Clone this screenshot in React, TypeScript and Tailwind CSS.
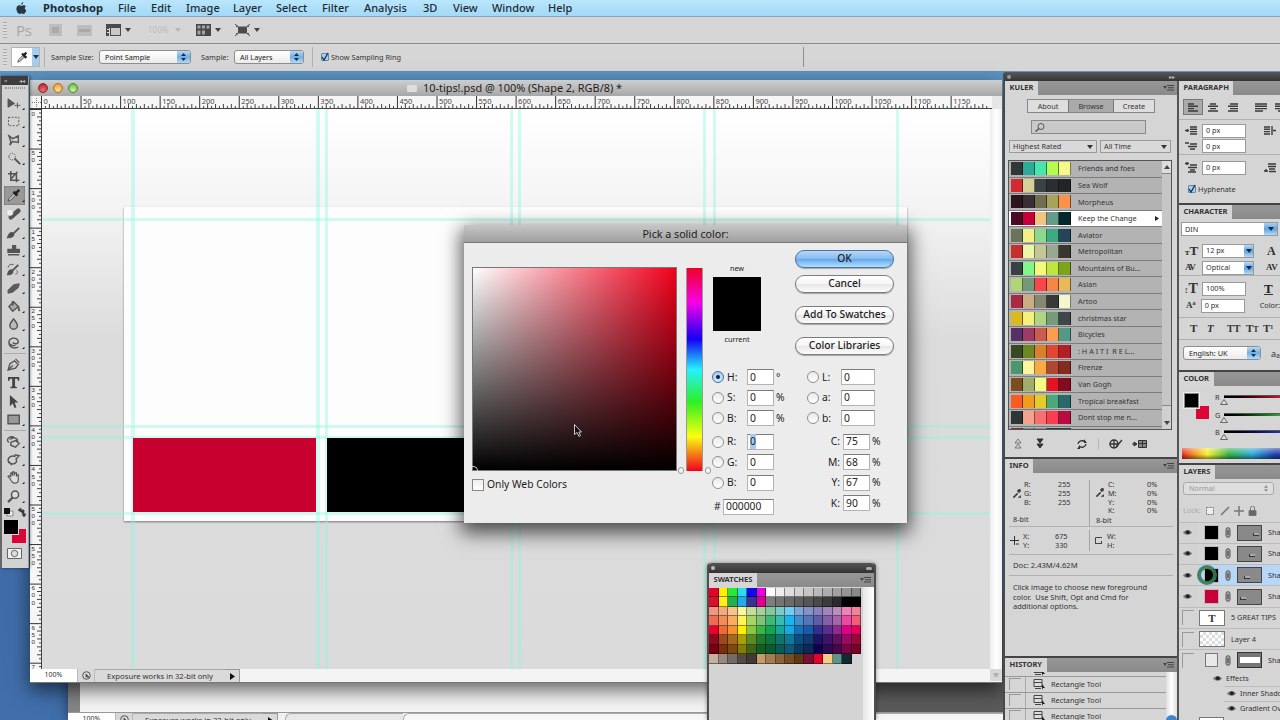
import type { ReactNode } from 'react';

const MENU: [string, string][] = [
  ['File', 'w-[33px]'],
  ['Edit', 'w-[35px]'],
  ['Image', 'w-[47px]'],
  ['Layer', 'w-[43px]'],
  ['Select', 'w-[46px]'],
  ['Filter', 'w-[42px]'],
  ['Analysis', 'w-[59px]'],
  ['3D', 'w-[30px]'],
  ['View', 'w-[39px]'],
  ['Window', 'w-[56px]'],
  ['Help', 'w-[40px]'],
];

const THEMES: { name: string; colors: string[] }[] = [
  { name: 'Friends and foes', colors: ['#333638', '#2cab96', '#45e8ac', '#b4fa50', '#f6fa86'] },
  { name: 'Sea Wolf', colors: ['#d12a30', '#d5cf98', '#3c4143', '#2a2e30', '#222526'] },
  { name: 'Morpheus', colors: ['#2a1520', '#382e33', '#6f6f50', '#a9a25a', '#fa934a'] },
  { name: 'Keep the Change', colors: ['#4d0a25', '#c60038', '#f0c483', '#669a8a', '#05292a'] },
  { name: 'Aviator', colors: ['#6c735c', '#f4f088', '#8bd98c', '#3ba983', '#234459'] },
  { name: 'Metropolitan', colors: ['#c5302a', '#edf5a6', '#c4c694', '#98a991', '#37372f'] },
  { name: 'Mountains of Bu...', colors: ['#3a4143', '#82f58b', '#f5fa7d', '#bde73f', '#7ba31c'] },
  { name: 'Asian', colors: ['#aed678', '#74997a', '#f8464b', '#f58546', '#e8b95b'] },
  { name: 'Artoo', colors: ['#a82a43', '#c9ad85', '#838773', '#383a36', '#f4f7ce'] },
  { name: 'christmas star', colors: ['#d9bb1d', '#f5f27c', '#b1d683', '#759b7b', '#40464a'] },
  { name: 'Bicycles', colors: ['#563067', '#9d3b63', '#c95b4f', '#fb9c51', '#519a87'] },
  { name: ': H A I T I  R E L...', colors: ['#374822', '#6e8722', '#d8802a', '#e14631', '#b21f27'] },
  { name: 'Firenze', colors: ['#4b966b', '#fbf69e', '#fba940', '#ae4835', '#852a20'] },
  { name: 'Van Gogh', colors: ['#7e4d1d', '#9fad6d', '#f4fa83', '#e41322', '#840c21'] },
  { name: 'Tropical breakfast', colors: ['#fa5b21', '#f09d1d', '#e3ce27', '#4ba979', '#2b686d'] },
  { name: 'Dont stop me n...', colors: ['#2e3536', '#f5a28c', '#fa6e6f', '#fa3d50', '#ba0b42'] },
  { name: '', colors: ['#753530', '#7a8c83', '#8c8c8c', '#20403d', '#33403b'] },
];

const SWATCHES: string[][] = [
  ['#e4002b', '#fff200', '#2be838', '#2bdcf0', '#1408e8', '#e800e0', '#ffffff', '#ededed', '#dedede', '#d2d2d2', '#c6c6c6', '#bababa', '#adadad', '#a1a1a1', '#959595', '#898989'],
  ['#d8102c', '#fff21a', '#20b050', '#25a9e8', '#3b3193', '#e00090', '#7d7d7d', '#747474', '#6a6a6a', '#5f5f5f', '#555555', '#494949', '#3b3b3b', '#2a2a2a', '#000000', '#000000'],
  ['#f29680', '#f4ab80', '#f8c48a', '#fbf79d', '#c5df9b', '#a3d39c', '#82ca9c', '#7accc8', '#6dcff6', '#7da7d9', '#8393ca', '#8781bd', '#a186be', '#bd8cbf', '#f080b5', '#f0829a'],
  ['#f06a55', '#f28c58', '#f8ad60', '#fff55a', '#a5d563', '#7cc576', '#3cb878', '#38bcb0', '#18b6f0', '#448ccb', '#5674b9', '#605ca8', '#8560a8', '#a864a8', '#ec4aa0', '#f05f7a'],
  ['#e80030', '#ee6a30', '#f39430', '#fff000', '#8cc63e', '#39b54a', '#14a550', '#16a89d', '#19a8e0', '#1670b9', '#1a5aa8', '#312f90', '#5c2d91', '#8f2890', '#e00088', '#e40058'],
  ['#8c0a1a', '#9a4a1c', '#a56820', '#aba000', '#5a8a28', '#1f7a30', '#0d7540', '#0e746c', '#10769a', '#0a4e80', '#123a70', '#1b1464', '#3c1468', '#620f62', '#9b0a60', '#98083c'],
  ['#790010', '#7a2e0c', '#7c4a10', '#857e05', '#406518', '#105e20', '#0a5a30', '#0a5a54', '#0c5a78', '#083a62', '#0c2854', '#0d004c', '#2e0850', '#4b0649', '#7b0446', '#7a0226'],
];

const SWATCHES_LAST = ['#c3b2a0', '#988b7e', '#736a63', '#534a45', '#403936', '#c69c6d', '#a67c52', '#8c6239', '#754c24', '#603813', '#7a1030', '#e0052e', '#f3cd85', '#5f9488', '#12292d'];

const H_LABELS = Array.from({ length: 24 }, (_, i) => i * 50);
const V_LABELS = Array.from({ length: 15 }, (_, i) => i * 50);
const V_GUIDES = ['left-[89px] w-1', 'left-[274px] w-1', 'left-[283px] w-[3px]', 'left-[468px] w-[3px]', 'left-[476px] w-[3px]', 'left-[661px] w-[3px]', 'left-[671px] w-[3px]', 'left-[854px] w-[3px]'];
const H_GUIDES = ['top-[109px]', 'top-[316px]', 'top-[327px]', 'top-[403px]'];

function Grip({ className = '' }: { className?: string }) {
  return <div className={`bg-[repeating-linear-gradient(180deg,#aaa_0_1px,#ddd_1px_3px)] ${className}`} />;
}

function Caret({ className = '' }: { className?: string }) {
  return (
    <svg className={`h-[4px] w-[6px] ${className}`} viewBox="0 0 6 4">
      <path d="M0 0h6L3 4z" fill="currentColor" />
    </svg>
  );
}

function MenuBar() {
  return (
    <div className="flex h-[17px] shrink-0 items-center border-b border-[#8aa5b5] bg-gradient-to-b from-[#b9e6fb] to-[#a4d8f6] text-[11px] font-medium text-[#1c2b33]">
      <svg className="ml-[15px] mr-[15px] h-[13px] w-[13px]" viewBox="0 0 13 13" fill="#2a3740">
        <path d="M8.2 0C8.3 1.400 7.400 2.600 6.200 2.700 6.100 1.500 7 .3 8.200 0zM10.800 4.300C9.400 5.200 9.500 7.500 11.300 8.300 10.900 9.700 9.900 11.900 8.700 11.900 8 11.900 7.500 11.500 6.600 11.500 5.700 11.500 5.200 11.900 4.500 11.900 3 11.900 1.400 9 1.400 6.800 1.400 4.500 2.800 3.300 4.300 3.300 5.200 3.300 6 3.900 6.500 3.900 7.100 3.900 7.900 3.200 9 3.300 9.700 3.300 10.400 3.700 10.800 4.300z" />
      </svg>
      <span className="w-[75px] text-[11.200px] font-bold">Photoshop</span>
      {MENU.map(([label, width]) => (
        <span key={label} className={width}>{label}</span>
      ))}
    </div>
  );
}

function AppBar() {
  return (
    <div className="flex h-[27px] shrink-0 items-center border-b border-[#8c8c8c] bg-[#d6d6d6] text-[#444]">
      <Grip className="ml-[3px] h-[16px] w-[4px]" />
      <span className="ml-[9px] w-[33px] text-[15px] tracking-tight text-[#a9a9a9]">Ps</span>
      <div className="flex h-[12px] w-[13px] items-center justify-center bg-[#bdbdbd]">
        <div className="h-[6px] w-[7px] bg-[#a9a9a9]" />
      </div>
      <div className="ml-[15px] flex h-[11px] w-[15px] items-center justify-center bg-[#bdbdbd]">
        <div className="h-[3px] w-[11px] bg-[#a9a9a9]" />
      </div>
      <svg className="ml-[14px] h-[12px] w-[15px]" viewBox="0 0 15 12">
        <path d="M0 0h15v12H4V4H3v8H0z" fill="#4a4a4a" />
        <path d="M5 4h9v7H5z" fill="#c9c9c9" />
        <path d="M1 5h2v1H1zM1 8h2v1H1z" fill="#ddd" />
      </svg>
      <Caret className="ml-[4px]" />
      <span className="ml-[17px] w-[27px] text-[8px] text-[#bcbcbc]">100%</span>
      <Caret className="text-[#b5b5b5]" />
      <svg className="ml-[15px] h-[12px] w-[15px]" viewBox="0 0 15 12">
        <path d="M0 0h15v12H0z" fill="#474747" />
        <path d="M1.500 1.500h3v3h-3zM6 1.500h3v3H6zM10.500 1.500h3v3h-3zM1.500 6.500h3v4h-3zM6 6.500h3v4H6z" fill="#a5a5a5" />
      </svg>
      <Caret className="ml-[4px]" />
      <svg className="ml-[14px] h-[12px] w-[15px]" viewBox="0 0 15 12">
        <path d="M3 2.500h9v7H3z" fill="#4c4c4c" />
        <path d="M0 0l3 2.500M15 0l-3 2.500M0 12l3-2.500M15 12l-3-2.500M1 2.500h2M12 2.500h2M1 9.500h2M12 9.500h2" stroke="#4c4c4c" fill="none" />
      </svg>
      <Caret className="ml-[4px]" />
    </div>
  );
}

function AquaSelect({ label, className }: { label: string; className: string }) {
  return (
    <div className={`flex items-center overflow-hidden rounded-[3px] border border-[#8e8e8e] bg-gradient-to-b from-white to-[#ececec] pl-[5px] text-[#222] ${className}`}>
      <span className="flex-1 whitespace-nowrap">{label}</span>
      <span className="flex h-full w-[13px] items-center justify-center bg-gradient-to-b from-[#b9d8f3] via-[#72afe4] to-[#b2dcf7]">
        <svg className="h-[8px] w-[5px]" viewBox="0 0 5 8">
          <path d="M0 3l2.500-3L5 3zM0 5l2.500 3L5 5z" fill="#16304f" />
        </svg>
      </span>
    </div>
  );
}

function CheckBox() {
  return (
    <span className="flex h-[8px] w-[8px] items-center justify-center rounded-[1px] border border-[#6787a6] bg-[#a7cdf0]">
      <svg className="h-[8px] w-[8px] overflow-visible" viewBox="0 0 8 8">
        <path d="M1 4l2 3 4-7" stroke="#14304d" strokeWidth="1.300" fill="none" />
      </svg>
    </span>
  );
}

function OptionsBar() {
  return (
    <div className="flex h-[27px] shrink-0 items-center bg-[#d6d6d6] pb-px text-[7.300px] text-[#333]">
      <Grip className="ml-[3px] h-[17px] w-[4px]" />
      <div className="ml-[4px] flex h-[20px] w-[29px] border border-[#b5b5b5] bg-white">
        <svg className="m-[2px] h-[14px] w-[16px]" viewBox="0 0 16 16">
          <path d="M3 14l1-3 5-5 2 2-5 5z" fill="#b5b5b5" stroke="#555" strokeWidth=".8" />
          <path d="M8 4l5 5M10 6l3-3" stroke="#222" strokeWidth="2.600" />
        </svg>
        <div className="flex h-full flex-1 items-center justify-center bg-[#a5cdf0]">
          <Caret className="text-[#1a3550]" />
        </div>
      </div>
      <div className="ml-[4px] h-[20px] w-px bg-[#b0b0b0]" />
      <span className="ml-[6px] w-[48px] whitespace-nowrap">Sample Size:</span>
      <AquaSelect label="Point Sample" className="h-[14px] w-[92px]" />
      <span className="ml-[10px] w-[33px]">Sample:</span>
      <AquaSelect label="All Layers" className="h-[14px] w-[70px]" />
      <div className="ml-[8px] mr-[8px] h-[20px] w-px bg-[#b0b0b0]" />
      <CheckBox />
      <span className="ml-[2px] whitespace-nowrap">Show Sampling Ring</span>
      <div className="ml-[402px] h-[20px] w-px bg-[#909090]" />
    </div>
  );
}

function Light({ className }: { className: string }) {
  return <div className={`h-[10px] w-[10px] rounded-full border ${className}`} />;
}

function HRuler() {
  return (
    <svg className="h-[13px] w-full shrink-0 bg-[#f6f6f6]" viewBox="0 0 972 13" preserveAspectRatio="none">
      <path d="M0 12.500h972" stroke="#444" />
      <path d="M11.500 0v13" stroke="#444" />
      <path d="M2 6.500h9M6.500 2v10" stroke="#777" strokeDasharray="1 1" />
      {H_LABELS.map((n, i) => (
        <g key={n}>
          <path d={`M${11.500 + i * 39.550} 0v13`} stroke="#333" />
          {Array.from({ length: 9 }, (_, k) => (
            <path key={k} d={`M${11.500 + i * 39.550 + (k + 1) * 3.955} ${k % 2 ? 8 : 10}v5`} stroke="#444" />
          ))}
          <text x={13.500 + i * 39.550} y="8" fontSize="7.500" fill="#444">{n}</text>
        </g>
      ))}
      <path d="M962 0h10v13h-10z" fill="#e6e6e6" />
    </svg>
  );
}

function VRuler() {
  return (
    <svg className="h-[560px] w-[12px] shrink-0 bg-[#f6f6f6]" viewBox="0 0 12 560">
      <path d="M11.500 0v560" stroke="#444" />
      {V_LABELS.map((n, i) => (
        <g key={n}>
          <path d={`M0 ${i * 39.550 + 0.500}h12`} stroke="#333" />
          {Array.from({ length: 9 }, (_, k) => (
            <path key={k} d={`M${k % 2 ? 7 : 9} ${i * 39.550 + (k + 1) * 3.955}h5`} stroke="#444" />
          ))}
          {String(n).split('').map((d, k) => (
            <text key={k} x="1.500" y={i * 39.550 + 6.500 + k * 7.200} fontSize="6.200" fill="#333" className="font-['Liberation_Sans']">{d}</text>
          ))}
        </g>
      ))}
    </svg>
  );
}

function StatusBar({ className = '' }: { className?: string }) {
  return (
    <div className={`flex h-[13px] shrink-0 items-stretch bg-[#f4f4f4] text-[7.700px] leading-[12px] text-[#333] ${className}`}>
      <span className="w-[47px] bg-white text-center text-[7px]">100%</span>
      <span className="flex w-[18px] items-center justify-center border-x border-[#b9b9b9] bg-[#d9d9d9]">
        <svg className="h-[9px] w-[9px]" viewBox="0 0 9 9" fill="none" stroke="#555">
          <circle cx="4.500" cy="4.500" r="3.800" />
          <path d="M4 3v3h3z" fill="#666" />
        </svg>
      </span>
      <span className="w-[130px] border-t border-[#aaa] bg-[#dadada] text-center">Exposure works in 32-bit only</span>
      <span className="flex w-[15px] items-center justify-center border-r border-t border-[#999] bg-[#dadada]">
        <svg className="h-[7px] w-[5px]" viewBox="0 0 5 7"><path d="M0 0l5 3.500L0 7z" fill="#111" /></svg>
      </span>
    </div>
  );
}

function DocumentWindow() {
  return (
    <div className="absolute left-[30px] top-[80px] flex h-[603px] w-[972px] flex-col border-b border-[#777] bg-[#f4f4f4] shadow-[0_7px_18px_rgba(0,0,0,0.6)]">
      <div className="flex h-[16px] shrink-0 items-center bg-gradient-to-b from-[#cfcfcf] to-[#a7a7a7] pl-[8px]">
        <Light className="border-[#8d2731] bg-[radial-gradient(circle_at_50%_80%,#ef6f70,#b01a2b)]" />
        <Light className="ml-[5px] border-[#a9702a] bg-[radial-gradient(circle_at_50%_80%,#ffe293,#ea8e2e)]" />
        <Light className="ml-[5px] border-[#4b8a35] bg-[radial-gradient(circle_at_50%_80%,#c8f59b,#56b83c)]" />
        <div className="ml-[329px] h-[7px] w-[10px] rounded-[1px] bg-[#dedede]" />
        <span className="ml-[6px] mt-px whitespace-nowrap text-[10.900px] leading-none text-[#222]">10-tips!.psd @ 100% (Shape 2, RGB/8) *</span>
      </div>
      <HRuler />
      <div className="flex h-[560px] shrink-0">
        <VRuler />
        {/* Canvas: guides and shapes sit at their document positions */}
        <div className="relative w-[948px] overflow-hidden bg-[linear-gradient(180deg,#fff_0px,#f5f5f5_90px,#dcdcdc_230px,#dbdbdb_560px)]">
          <div className="absolute left-[82px] top-[98px] h-[314px] w-[783px] bg-[#fdfdfd] shadow-[0_1px_2px_rgba(0,0,0,0.45)]" />
          {V_GUIDES.map((g) => (
            <div key={g} className={`absolute inset-y-0 bg-[#8cf7e0]/40 ${g}`} />
          ))}
          {H_GUIDES.map((g) => (
            <div key={g} className={`absolute inset-x-0 h-[3px] bg-[#8cf7e0]/40 ${g}`} />
          ))}
          <div className="absolute left-[91px] top-[329px] h-[74px] w-[183px] bg-[#c8002f]" />
          <div className="absolute left-[285px] top-[329px] h-[74px] w-[183px] bg-black" />
        </div>
        <div className="w-[12px] bg-gradient-to-r from-[#ededed] via-white to-[#f0f0f0]" />
      </div>
      <div className="flex h-[13px] shrink-0">
        <StatusBar className="flex-1" />
        <svg className="h-[12px] w-[12px] bg-[#d8d8d8]" viewBox="0 0 12 12">
          <path d="M3.500 5h5M4.500 7h3" stroke="#888" />
        </svg>
      </div>
    </div>
  );
}

function BackWindow() {
  return (
    <div className="absolute left-[68px] top-[600px] flex h-[120px] w-[936px] flex-col bg-[#8b8b8b] shadow-[0_0_12px_rgba(0,0,0,0.5)]">
      <div className="flex h-[112px]">
        <div className="w-[12px] bg-[#858585]" />
        <div className="w-[796px] bg-[#f4f4f4]" />
        <div className="flex-1 bg-[#5a5a5a]" />
      </div>
      <div className="flex h-[8px] overflow-hidden border-t border-[#999] bg-[#f1f1f1]">
        <StatusBar />
        <div className="ml-[7px] h-[10px] w-[118px] rounded-tl-md border-l border-t border-[#aaa] bg-[#e8e8e8]" />
        <div className="h-[10px] flex-1 rounded-tl-md border-l border-t border-[#aaa] bg-[#f6f6f6]" />
      </div>
    </div>
  );
}

const TOOLS_A: ReactNode[] = [
  <path d="M2 3l7 5-7 4zM12 7v6M9 10h6" fill="#555" />,
  <path d="M2.500 3.500h11v9h-11z" fill="none" strokeDasharray="2 1.500" />,
  <path d="M3 3l4 3 6-3v7l-6-1-3 4 1-4z" fill="none" strokeWidth="1.500" />,
  <g><path d="M3 6a3.500 3.500 0 0 1 7 0 3.500 3.500 0 0 1-7 0" fill="none" strokeDasharray="1.500 1" /><path d="M9 8l6 6" strokeWidth="2" /></g>,
  <path d="M5 2v10h9M2 5h9v9M5 11l7-8" fill="none" strokeWidth="1.600" />,
  <g><path d="M2 14l1-3 5-5 2 2-5 5z" fill="#bbb" /><path d="M8 4l4 4M10 6l4-4" strokeWidth="2.800" stroke="#222" /></g>,
  <g><path d="M5 12l8-7" strokeWidth="5" strokeLinecap="round" /><circle cx="4" cy="7" r="3.500" fill="#eee" stroke="#aaa" strokeDasharray="1 1" /></g>,
  <path d="M2 13c2-5 4-5 6-4 0 3-3 4-6 4zM8 9l6-6" fill="#444" strokeWidth="2" />,
  <path d="M7 3h3v4h4v3H2V7h5zM2 12.500h12" fill="#555" strokeWidth="1.500" />,
  <g><path d="M2 13c1-4 3-5 5-4 0 3-2 4-5 4zM7 9l6-6" fill="#444" strokeWidth="2" /><path d="M2 6a4 4 0 0 1 6-3M11 9c2 1 1 4-1 4" fill="none" /></g>,
  <path d="M2 11l6-6 6-1-1 4-6 5-5 1z" fill="#5b5b5b" />,
  <g><path d="M3 8l5-5 5 5-6 5z" fill="#aaa" strokeWidth="1.500" /><path d="M7 7V2M13 8l1 5" strokeWidth="2" /></g>,
  <path d="M8 2c3 4 4 5 4 7a4 4 0 0 1-8 0c0-2 1-3 4-7z" fill="#bbb" strokeWidth="1.500" />,
  <path d="M10 11a5 4 0 1 1 3-4c0 3-4 3-6 1M3 8c0 5 5 7 10 5" fill="none" strokeWidth="1.500" />,
];

const TOOLS_B: ReactNode[] = [
  <path d="M2 14l2-7 5-3 4 4-3 4zM2 14l5-5M10 2l4 4" fill="#ccc" strokeWidth="1.400" />,
  <path d="M2 2h12v4h-1.500L12 4H9.500v8l2 1v1h-7v-1l2-1V4H4l-.5 2H2z" fill="#444" stroke="none" />,
  <path d="M4 1l9 8H9l2 5-2 1-2-5-3 3z" fill="#444" stroke="none" />,
  <path d="M2 3.500h12v9H2z" fill="#999" strokeWidth="1.500" />,
];

const TOOLS_C: ReactNode[] = [
  <path d="M3 9a4 3 0 1 1 6-5M4 6c4-4 9-1 8 2M5 9l5-2 4 3-4 4-5-2z" fill="none" strokeWidth="1.500" />,
  <path d="M3 12c-3-6 3-9 7-7M4 12c5 2 8-1 7-4M9 3l5 1-4 4M3 10l3 4" fill="none" strokeWidth="1.500" />,
  <path d="M4 9L2 7l1-1 2 1V3l1.500 0V6L7 2h1.500v4l1-3H11l0 4 1-2 1 0v5c0 3-2 4-4 4s-3-1-5-5z" fill="#ddd" strokeWidth="1.200" />,
  <g><circle cx="9.500" cy="6" r="3.800" fill="#ddd" strokeWidth="1.600" /><path d="M7 9l-5 5" strokeWidth="2.300" /></g>,
];

function Tool({ children, active = false }: { children: ReactNode; active?: boolean }) {
  return (
    <div className={`flex h-[18.450px] w-[21px] items-center justify-center ${active ? 'bg-[#999] shadow-[inset_0_0_2px_#555]' : ''}`}>
      <svg className="ml-[2px] h-[15px] w-[19px]" viewBox="0 0 20 16" stroke="#555">
        {children}
        <path d="M17 15h2.500v-2.500z" fill="#222" stroke="none" />
      </svg>
    </div>
  );
}

function Toolbox() {
  return (
    <div className="absolute left-0 top-[76px] flex h-[492px] w-[29px] flex-col items-center border-l-2 border-r border-l-[#686868] border-r-[#999] bg-[#d2d2d2] pr-px shadow-[1px_0_3px_rgba(0,0,0,0.5)]">
      <div className="flex h-[9px] w-[27px] shrink-0 items-center justify-between bg-[#3d3d3d] px-[3px] text-[6px] leading-none text-[#bbb]">
        <span>×</span>
        <span>◂◂</span>
      </div>
      <div className="mb-[5px] mt-[2px] h-[2px] w-[20px] shrink-0 border-y border-dotted border-[#999]" />
      {TOOLS_A.map((icon, i) => (
        <Tool key={i} active={i === 5}>{icon}</Tool>
      ))}
      <div className="my-px h-px w-[22px] shrink-0 bg-[#aaa]" />
      {TOOLS_B.map((icon, i) => (
        <Tool key={i}>{icon}</Tool>
      ))}
      <div className="my-px h-px w-[22px] shrink-0 bg-[#aaa]" />
      {TOOLS_C.map((icon, i) => (
        <Tool key={i}>{icon}</Tool>
      ))}
      <svg className="mt-[1px] h-[10px] w-[24px] shrink-0" viewBox="0 0 24 10">
        <path d="M4 4h6v5H4z" fill="#eee" stroke="#888" />
        <path d="M1 1h6v6H1z" fill="#111" />
        <path d="M16 3h5v5M15 3l3-2v4zM19 7h4l-2 3z" fill="#333" stroke="#444" strokeWidth=".8" />
      </svg>
      <div className="relative mt-[3px] h-[24px] w-[22px] shrink-0">
        <div className="absolute bottom-[1px] right-0 h-[14px] w-[14px] bg-[#dd0535]" />
        <div className="absolute left-0 top-0 h-[15px] w-[15px] border-b border-r border-[#ddd] bg-black" />
      </div>
      <svg className="mt-[4px] h-[11px] w-[15px] shrink-0" viewBox="0 0 15 11" stroke="#666">
        <path d="M.5 .5h14v10H.5z" fill="#eee" />
        <circle cx="7.500" cy="5.500" r="3.200" fill="#ddd" />
      </svg>
    </div>
  );
}

function DialogButton({ label, primary = false, className = '' }: { label: string; primary?: boolean; className?: string }) {
  return (
    <button
      type="button"
      className={`flex h-[18px] w-[99px] items-center justify-center rounded-full border text-[10.300px] font-medium text-[#1d1d1d] shadow-[0_1px_1px_rgba(0,0,0,0.3)] ${
        primary
          ? 'border-[#4a75a8] bg-[linear-gradient(180deg,#b9d7f5_0%,#86bbf0_48%,#62a9ee_52%,#b2e0fd_100%)]'
          : 'border-[#7d7d7d] bg-[linear-gradient(180deg,#fff_0%,#f6f6f6_48%,#e8e8e8_52%,#fbfbfb_100%)]'
      } ${className}`}
    >
      {label}
    </button>
  );
}

function Radio({ on = false }: { on?: boolean }) {
  return (
    <span className={`flex h-[12px] w-[12px] shrink-0 items-center justify-center rounded-full border ${on ? 'border-[#436d9a] bg-gradient-to-b from-[#a8cbec] to-[#cfeaff]' : 'border-[#8f8f8f] bg-gradient-to-b from-[#e9e9e9] to-white'}`}>
      {on && <span className="h-[4px] w-[4px] rounded-full bg-[#10233a]" />}
    </span>
  );
}

function Field({ value, className, selected = false }: { value: string; className: string; selected?: boolean }) {
  return (
    <span className={`flex h-[16px] shrink-0 items-center border border-[#b3b3b3] border-t-[#7c7c7c] bg-white pl-[2px] ${className}`}>
      <span className={selected ? 'bg-[#a5cbf3]' : ''}>{value}</span>
    </span>
  );
}

function RadioRow({ label, unit = '', on, selected, wide }: { label: string; unit?: string; on?: boolean; selected?: boolean; wide?: boolean }) {
  return (
    <div className="flex h-[20.500px] items-center">
      <Radio on={on} />
      <span className={wide ? 'w-[22px] pl-[3px]' : 'w-[23px] pl-[3px]'}>{label}</span>
      <Field value="0" className={wide ? 'w-[34px]' : 'w-[27px]'} selected={selected} />
      <span className="pl-[2px]">{unit}</span>
    </div>
  );
}

function CmykRow({ label, value }: { label: string; value: string }) {
  return (
    <div className="flex h-[20.500px] items-center">
      <span className="w-[36px] pr-[3px] text-right">{label}</span>
      <Field value={value} className="w-[27px]" />
      <span className="pl-[2px]">%</span>
    </div>
  );
}

function ColorPicker() {
  return (
    <div className="absolute left-[464px] top-[225px] flex h-[298px] w-[443px] flex-col bg-[#ececec] text-[10.300px] text-[#222] shadow-[0_7px_18px_3px_rgba(0,0,0,0.65)]">
      <div className="flex h-[18px] shrink-0 items-center justify-center border-b border-[#777] bg-gradient-to-b from-[#c6c6c6] to-[#a0a0a0] pt-[2px] text-[10.700px]">
        Pick a solid color:
      </div>
      <div className="flex flex-1 pl-[8px]">
        <div className="w-[205px] pt-[24px]">
          <div className="relative h-[204px] border border-[#777] bg-[linear-gradient(0deg,#000,transparent),linear-gradient(90deg,#fff,#f2001c)]">
            <svg className="absolute left-[101px] top-[156px] h-[13px] w-[8px]" viewBox="0 0 8 13">
              <path d="M.5 .5v10L3 8.500 5 12.500l1.500-1L4.800 8h2.700z" fill="#111" stroke="#ddd" strokeWidth=".9" />
            </svg>
            <div className="absolute -left-px bottom-[-1px] h-[5px] w-[6px] rounded-tr-full border-r border-t border-[#ccc]" />
          </div>
          <div className="mt-[6px] flex items-center">
            <span className="h-[12px] w-[12px] border border-[#888] bg-gradient-to-b from-[#eee] to-white" />
            <span className="ml-[3px]">Only Web Colors</span>
          </div>
        </div>
        <div className="relative ml-[9px] mt-[25px] h-[203px] w-[17px] border-x border-[#999] bg-[linear-gradient(180deg,#f00025_0%,#f700e8_17%,#1500f2_35%,#25f2ff_50%,#2cf022_66%,#fbff10_83%,#f0001e_100%)]">
          <div className="absolute -left-[9px] bottom-[-3px] h-[7px] w-[6px] rounded-full border border-[#999] bg-[#f4f4f4]" />
          <div className="absolute -right-[9px] bottom-[-3px] h-[7px] w-[6px] rounded-full border border-[#999] bg-[#f4f4f4]" />
        </div>
        <div className="ml-[9px] flex-1">
          <div className="flex h-[124px]">
            <div className="flex w-[50px] flex-col items-center pt-[20px] text-[7.300px] leading-[11px]">
              <span>new</span>
              <div className="my-[3px] h-[54px] w-[48px] bg-black" />
              <span>current</span>
            </div>
            <div className="ml-[33px] pt-[7px]">
              <DialogButton label="OK" primary />
              <DialogButton label="Cancel" className="mt-[7px]" />
              <DialogButton label="Add To Swatches" className="mt-[13px]" />
              <DialogButton label="Color Libraries" className="mt-[13px]" />
            </div>
          </div>
          <div className="flex">
            <div className="w-[95px]">
              <RadioRow label="H:" unit="°" on />
              <RadioRow label="S:" unit="%" />
              <RadioRow label="B:" unit="%" />
              <div className="h-[3px]" />
              <RadioRow label="R:" selected />
              <RadioRow label="G:" />
              <RadioRow label="B:" />
              <div className="mt-[4px] flex h-[19px] items-center">
                <span className="w-[11px] pl-[2px]">#</span>
                <Field value="000000" className="w-[51px]" />
              </div>
            </div>
            <div>
              <RadioRow label="L:" wide />
              <RadioRow label="a:" wide />
              <RadioRow label="b:" wide />
              <div className="h-[3px]" />
              <CmykRow label="C:" value="75" />
              <CmykRow label="M:" value="68" />
              <CmykRow label="Y:" value="67" />
              <CmykRow label="K:" value="90" />
            </div>
          </div>
        </div>
      </div>
    </div>
  );
}

function TabRow({ title, menu = false }: { title: string; menu?: boolean }) {
  return (
    <div className="flex h-[14px] shrink-0 items-stretch bg-gradient-to-b from-[#979797] to-[#8a8a8a]">
      <span className="flex items-center bg-[#d6d6d6] px-[4.500px] text-[7.500px] font-bold text-[#333]">{title}</span>
      {menu && (
        <svg className="ml-auto mr-[3px] mt-[3px] h-[7px] w-[11px]" viewBox="0 0 11 7">
          <path d="M0 2h4L2 5zM4 1h7v1H4zM5 3.200h6v1H5zM4 5.500h7v1H4z" fill="#444" />
        </svg>
      )}
    </div>
  );
}

function SwatchesPanel() {
  return (
    <div className="absolute left-[707px] top-[563px] flex h-[157px] w-[169px] flex-col rounded-t-[4px] border-x-2 border-[#4e4e4e] bg-[#d4d4d4] shadow-[0_0_4px_rgba(0,0,0,0.4)]">
      <div className="flex h-[10px] shrink-0 items-center justify-between rounded-t-[3px] bg-gradient-to-b from-[#555] to-[#333] px-[2px]">
        <span className="h-[4px] w-[4px] rounded-full bg-[#bbb]" />
        <span className="h-[3px] w-[6px] rounded-full bg-[#aaa]" />
      </div>
      <TabRow title="SWATCHES" menu />
      <div className="flex flex-1">
        <div className="w-[154px] pt-px">
          {SWATCHES.map((row, i) => (
            <div key={i} className="flex h-[9.450px]">
              {row.map((c, k) => (
                <span key={k} className="h-full w-[9.500px] border-b border-r border-black/45" style={{ backgroundColor: c }} />
              ))}
            </div>
          ))}
          <div className="flex h-[9.450px]">
            {SWATCHES_LAST.map((c, k) => (
              <span key={k} className="h-full w-[9.500px] border-b border-r border-black/45" style={{ backgroundColor: c }} />
            ))}
          </div>
        </div>
        <div className="ml-auto w-[11px] bg-gradient-to-r from-[#e6e6e6] to-white" />
      </div>
    </div>
  );
}

function FlatSelect({ label, className }: { label: string; className: string }) {
  return (
    <div className={`flex h-[13px] items-center justify-between border border-[#999] bg-[#d9d9d9] px-[3px] ${className}`}>
      <span className="whitespace-nowrap">{label}</span>
      <Caret className="w-[5px]" />
    </div>
  );
}

function KulerPanel() {
  return (
    <div className="flex h-[376px] shrink-0 flex-col">
      <TabRow title="KULER" menu />
      <div className="mx-auto mt-[4px] flex h-[14px] w-[128px] shrink-0 border border-[#888] bg-[#dedede] text-center leading-[12px]">
        <span className="w-[40px]">About</span>
        <span className="w-[46px] border-x border-[#777] bg-[#aaa]">Browse</span>
        <span className="flex-1">Create</span>
      </div>
      <div className="ml-[26px] mt-[7px] flex h-[14px] w-[115px] shrink-0 items-center border border-[#8a8a8a] bg-[#c9c9c9] pl-[3px]">
        <svg className="h-[9px] w-[10px]" viewBox="0 0 10 9" fill="none" stroke="#555">
          <circle cx="6" cy="3.500" r="3" />
          <path d="M4 5.500L.5 8.500" strokeWidth="1.500" />
        </svg>
      </div>
      <div className="ml-[4px] mt-[6px] flex shrink-0 gap-[3px]">
        <FlatSelect label="Highest Rated" className="w-[88px]" />
        <FlatSelect label="All Time" className="w-[71px]" />
      </div>
      <div className="ml-[3px] mt-[7px] flex h-[270px] w-[164px] shrink-0 border border-[#555] bg-[#8d8d8d]">
        <div className="w-[153px] overflow-hidden">
          {THEMES.map((theme, i) => (
            <div key={i} className={`flex h-[16.600px] items-center border-b border-[#7c7c7c] pl-[2px] ${i === 3 ? 'bg-white' : 'bg-[#b3b3b3]'}`}>
              <div className="flex h-[13px] w-[60px] shrink-0 bg-[#333]">
                {theme.colors.map((c, k) => (
                  <span key={k} className="flex-1 border-r border-black/50" style={{ backgroundColor: c }} />
                ))}
              </div>
              <span className="ml-[7px] flex-1 whitespace-pre">{theme.name}</span>
              {i === 3 && <svg className="mr-[3px] h-[5px] w-[4px]" viewBox="0 0 4 5"><path d="M0 0l4 2.500L0 5z" fill="#222" /></svg>}
            </div>
          ))}
        </div>
        <div className="flex flex-1 flex-col items-center justify-between bg-[#c6c6c6] text-[#444]">
          <span className="flex h-[13px] w-full items-center justify-center border-b border-[#888] bg-[#ddd]"><Caret className="w-[5px] rotate-180" /></span>
          <span className="flex h-[24px] w-full items-end justify-center border-t border-[#888] bg-[#d0d0d0] pb-[4px]"><Caret className="w-[5px]" /></span>
        </div>
      </div>
      <div className="flex flex-1 items-center pl-[8px]">
        <svg className="h-[12px] w-[160px]" viewBox="0 0 160 12" stroke="#333" fill="#333">
          <path d="M2 5l3-4 3 4zM2 10l3-4 3 4z" fill="none" stroke="#777" />
          <path d="M24 1h6l-3 4zM24 6h6l-3 4z" />
          <path d="M65 6a4 3.500 0 0 1 7-2M73 6a4 3.500 0 0 1-7 2" fill="none" strokeWidth="1.300" />
          <path d="M71 1v4h3zM67 7v4h-3z" stroke="none" />
          <path d="M85.500 0v12" stroke="#b5b5b5" />
          <circle cx="101" cy="6" r="4" fill="none" strokeWidth="1.500" />
          <path d="M97 6h8M101 2v8M103 9l6-7" strokeWidth="1.300" />
          <path d="M119 6h4M121 4l3 2-3 2z" />
          <path d="M125.500 2.500h8v7h-8zM125 5.500h9M129.500 2v8" fill="#888" />
        </svg>
      </div>
    </div>
  );
}

function InfoPanel() {
  return (
    <div className="flex h-[199px] shrink-0 flex-col border-t-2 border-[#444]">
      <TabRow title="INFO" menu />
      <div className="mx-[4px] flex h-[54px] shrink-0 border-b border-[#b0b0b0] pt-[7px] leading-[8.800px]">
        <div className="flex w-[81px] flex-col justify-between border-r border-[#a5a5a5] pb-[2px] pl-[4px]">
          <div className="flex items-center">
            <Dropper />
            <div className="ml-[3px] w-[34px]">R:<br />G:<br />B:</div>
            <div>255<br />255<br />255</div>
          </div>
          <span>8-bit</span>
        </div>
        <div className="flex flex-1 flex-col pl-[6px]">
          <div className="flex items-start">
            <Dropper className="mt-[8px]" />
            <div className="ml-[4px] w-[39px]">C:<br />M:<br />Y:<br />K:</div>
            <div>0%<br />0%<br />0%<br />0%</div>
          </div>
          <span className="mt-[1px]">8-bit</span>
        </div>
      </div>
      <div className="mx-[4px] flex h-[28px] shrink-0 border-b border-[#b0b0b0] py-[3px] leading-[9px]">
        <div className="flex w-[81px] items-center border-r border-[#a5a5a5] pl-[1px]">
          <svg className="h-[9px] w-[9px]" viewBox="0 0 9 9" stroke="#333"><path d="M4.500 0v9M0 4.500h9M6 8h3" /></svg>
          <div className="ml-[4px] w-[32px]">X:<br />Y:</div>
          <div>675<br />330</div>
        </div>
        <div className="flex items-center pl-[4px]">
          <svg className="h-[9px] w-[9px]" viewBox="0 0 9 9" fill="none" stroke="#444"><path d="M1.500 8V1.500H8M2 7.500h5M7.500 5v3" /></svg>
          <div className="ml-[4px]">W:<br />H:</div>
        </div>
      </div>
      <div className="mx-[4px] flex h-[21px] shrink-0 items-center border-b border-[#b0b0b0] pl-[4px] pt-px text-[7.600px]">Doc: 2.43M/4.62M</div>
      <p className="ml-[8px] mt-[7px] whitespace-nowrap text-[7.450px] leading-[9.700px]">
        Click image to choose new foreground<br />color.&nbsp; Use Shift, Opt and Cmd for<br />additional options.
      </p>
    </div>
  );
}

function Dropper({ className = '' }: { className?: string }) {
  return (
    <svg className={`h-[9px] w-[8px] ${className}`} viewBox="0 0 8 9">
      <path d="M0 8l4-4 1 1-4 4zM4 2l2-2 1 0 1 2-2 2zM5 8.500h3v-2z" fill="#444" stroke="#444" strokeWidth=".5" />
    </svg>
  );
}

function HistoryIcon() {
  return (
    <svg className="ml-[7px] h-[11px] w-[12px]" viewBox="0 0 12 11">
      <path d="M1 .5h8v7H1zM1 3.500h8M2 9.500h6" fill="#ddd" stroke="#444" />
      <path d="M9 5l3 4-2 0-1 2z" fill="#222" />
    </svg>
  );
}

function HistoryPanel() {
  return (
    <div className="flex flex-1 flex-col overflow-hidden border-t-2 border-[#444]">
      <TabRow title="HISTORY" menu />
      <div className="flex">
        <div className="flex-1">
          <div className="flex h-[4px] items-end overflow-hidden pl-[21px]">
            <HistoryIcon />
          </div>
          {[0, 1, 2].map((i) => (
            <div key={i} className="flex h-[15.900px] items-center border-t border-[#999]">
              <span className="mx-[4px] h-[12px] w-[12px] border-l border-t border-[#999]" />
              <span className="h-full w-px bg-[#aaa]" />
              <HistoryIcon />
              <span className="ml-[6px]">Rectangle Tool</span>
            </div>
          ))}
        </div>
        <div className="flex w-[11px] flex-col justify-end bg-gradient-to-r from-[#ddd] via-white to-[#ddd]">
          <div className="h-[9px] rounded-t-full bg-[#3f86cf]" />
        </div>
      </div>
    </div>
  );
}

function AlignIcon({ d }: { d: string }) {
  return (
    <svg className="h-[11px] w-[12px] shrink-0" viewBox="0 0 12 11" stroke="#3a3a3a" strokeWidth="1.400">
      <path d={d} />
    </svg>
  );
}

function PxInput({ value, aqua = false }: { value: string; aqua?: boolean }) {
  return (
    <span className={`flex h-[14px] shrink-0 items-center border border-[#999] bg-white pl-[3px] ${aqua ? 'w-[52px]' : 'w-[44px]'}`}>
      <span className="flex-1">{value}</span>
      {aqua && <span className="flex h-full w-[9px] items-center justify-center bg-gradient-to-b from-[#b7dbf8] via-[#5fa3de] to-[#b2dcf7]"><Caret className="w-[5px] text-[#102a48]" /></span>}
    </span>
  );
}

const CENTERED = 'M3 2h6M1 4.300h10M3 6.600h6M1 9h10';

function ParagraphPanel() {
  return (
    <div className="flex h-[122px] shrink-0 flex-col">
      <TabRow title="PARAGRAPH" />
      <div className="flex h-[25px] shrink-0 items-center border-b border-[#b0b0b0] pl-[4px]">
        <span className="mr-[4px] flex h-[16px] w-[20px] shrink-0 items-center justify-center border border-[#777] bg-[#aaa]"><AlignIcon d="M1 2h6M1 4.300h10M1 6.600h6M1 9h10" /></span>
        <AlignIcon d={CENTERED} />
        <span className="w-[8px] shrink-0" />
        <AlignIcon d="M3 2h8M1 4.300h10M3 6.600h8M1 9h10" />
        <span className="w-[16px] shrink-0" />
        <AlignIcon d="M0 2h12M0 4.300h12M0 6.600h12M0 9h8" />
        <span className="w-[8px] shrink-0" />
        <AlignIcon d="M0 2h12M0 4.300h12M0 6.600h12M3 9h7" />
      </div>
      <div className="mt-[2px] flex h-[17px] items-center pl-[6px]">
        <AlignIcon d="M5 2h7M5 4.300h7M5 6.600h7M5 9h7M0 5.500h4M2.500 4v3" />
        <span className="w-[5px] shrink-0" />
        <PxInput value="0 px" />
        <span className="w-[18px] shrink-0" />
        <AlignIcon d="M0 2h6M0 4.300h6M0 6.600h6M0 9h6M8 1v9M9 5.500h3" />
      </div>
      <div className="flex h-[16px] items-center border-b border-[#b0b0b0] pb-px pl-[6px]">
        <AlignIcon d="M0 2h4M5 3h7M3 5.500h9M5 8h5" />
        <span className="w-[5px] shrink-0" />
        <PxInput value="0 px" />
      </div>
      <div className="mt-[4px] flex h-[17px] items-center pl-[6px]">
        <AlignIcon d="M0 1.500h4M2 0v3M5 3h7M3 5.500h9M5 8h5M3 10h8" />
        <span className="w-[5px] shrink-0" />
        <PxInput value="0 px" />
        <span className="w-[18px] shrink-0" />
        <AlignIcon d="M4 2h8M4 4.500h8M5 7h6M0 9h4M2 7v3M5 9.500h7" />
      </div>
      <div className="mt-[8px] flex items-center pl-[9px]"><CheckBox /><span className="ml-[2px]">Hyphenate</span></div>
    </div>
  );
}

function CharacterPanel() {
  return (
    <div className="flex h-[167px] shrink-0 flex-col border-t-2 border-[#444]">
      <TabRow title="CHARACTER" />
      <div className="ml-[2px] mt-[3px] flex h-[14px] w-[97px] items-center border border-[#999] bg-white pl-[3px]">
        <span className="flex-1">DIN</span>
        <span className="flex h-full w-[13px] items-center justify-center bg-gradient-to-b from-[#a8d1f5] via-[#5fa3de] to-[#b2dcf7]"><Caret className="text-[#102a48]" /></span>
      </div>
      <div className="mt-[6px] flex h-[17px] items-center pl-[6px]">
        <span className="w-[17px] font-['Liberation_Serif'] font-bold text-[#333]"><span className="text-[9px]">т</span><span className="text-[13px]">T</span></span>
        <PxInput value="12 px" aqua />
        <span className="ml-[13px] font-['Liberation_Serif'] text-[12px] font-bold">A</span>
      </div>
      <div className="mt-px flex h-[16px] items-center border-b border-[#b0b0b0] pl-[6px]">
        <span className="w-[17px] font-['Liberation_Serif'] text-[9px] font-bold tracking-[-1px]">AV</span>
        <PxInput value="Optical" aqua />
        <span className="ml-[12px] font-['Liberation_Serif'] text-[9px] font-bold">AV</span>
      </div>
      <div className="mt-[4px] flex h-[17px] items-center pl-[5px]">
        <span className="w-[18px] whitespace-nowrap font-['Liberation_Serif'] text-[14px] font-bold leading-none text-[#333]"><span className="text-[9px]">↕</span>T</span>
        <PxInput value="100%" />
        <span className="ml-[18px] border-b border-[#333] font-['Liberation_Serif'] text-[13px] font-bold leading-[11px] text-[#222]">T</span>
      </div>
      <div className="flex h-[17px] items-center pl-[7px]">
        <span className="w-[16px] font-['Liberation_Serif'] text-[9px] font-bold">A<sup className="text-[6px]">a</sup></span>
        <PxInput value="0 px" />
        <span className="ml-[15px]">Color:</span>
      </div>
      <div className="mt-[3px] flex h-[23px] items-center border-y border-[#b0b0b0] pl-[11px] font-['Liberation_Serif'] text-[11px] font-bold text-[#333]">
        <span className="w-[17px]">T</span>
        <span className="w-[20px] italic">T</span>
        <span className="w-[19px] text-[10px]">TT</span>
        <span className="w-[17px]">T<span className="text-[8px]">T</span></span>
        <span>T<sup className="text-[6px]">1</sup></span>
      </div>
      <div className="mt-[6px] flex items-center pl-[4px]">
        <AquaSelect label="English: UK" className="h-[14px] w-[78px]" />
        <span className="ml-[10px] text-[9px] leading-none">a<sub>a</sub></span>
      </div>
    </div>
  );
}

function ColorPanel() {
  return (
    <div className="flex h-[93px] shrink-0 flex-col border-t-2 border-[#444]">
      <TabRow title="COLOR" />
      <div className="flex h-[60px] pt-[7px]">
        <div className="relative ml-[5px] h-[26px] w-[25px]">
          <div className="absolute bottom-0 right-0 h-[13px] w-[13px] bg-[#dd0535]" />
          <div className="absolute left-0 top-0 h-[15px] w-[15px] border border-[#888] bg-black shadow-[0_0_0_1px_#eee]" />
        </div>
        <div className="ml-[6px] flex flex-1 flex-col">
          <Slider label="R" className="to-[#c01830]" />
          <Slider label="G" className="to-[#2fa637]" />
          <Slider label="B" className="to-[#2130b8]" />
        </div>
      </div>
      <div className="ml-[3px] mt-[2px] h-[11px] overflow-hidden bg-[linear-gradient(180deg,#ffffff77,transparent_60%,#00000077),linear-gradient(90deg,#e02a20,#f08a20_12%,#f5f030_26%,#35b045_48%,#2aa8d8_72%,#203fa8_95%)]" />
    </div>
  );
}

function Slider({ label, className }: { label: string; className: string }) {
  return (
    <div className="flex h-[18.300px]">
      <span className="w-[7px] leading-[8px]">{label}</span>
      <div className="flex-1 pl-[2px] pt-[2px]">
        <div className={`h-[3px] border-t border-[#555] bg-gradient-to-r from-black ${className}`} />
        <svg className="-ml-[4px] mt-px h-[6px] w-[8px]" viewBox="0 0 8 6"><path d="M4 .5l3.500 5h-7z" fill="#ddd" stroke="#666" /></svg>
      </div>
    </div>
  );
}

function Eye() {
  return (
    <svg className="h-[7px] w-[9px] shrink-0" viewBox="0 0 9 7">
      <path d="M0 3.500C2 .5 7 .5 9 3.500 7 6.500 2 6.500 0 3.500z" fill="#777" />
      <circle cx="4.800" cy="3.300" r="2" fill="#222" />
    </svg>
  );
}

function Link() {
  return (
    <span className="mx-[5px] flex w-[8px] shrink-0 justify-center">
      <svg className="h-[11px] w-[6px]" viewBox="0 0 6 11"><rect x="1" y=".7" width="4" height="9.600" rx="2" fill="#aaa" stroke="#555" /><path d="M3 3v5" stroke="#333" /></svg>
    </span>
  );
}

const SHAPES: { fill: string; mark: string; active?: boolean }[] = [
  { fill: 'bg-black', mark: 'ml-[15px]' },
  { fill: 'bg-black', mark: 'ml-[11px]' },
  { fill: 'bg-black', mark: 'ml-[6px]', active: true },
  { fill: 'bg-[#c8003a]', mark: 'ml-[2px]' },
];

function LayersPanel() {
  return (
    <div className="flex flex-1 flex-col overflow-hidden border-t-2 border-[#444]">
      <TabRow title="LAYERS" />
      <div className="ml-[4px] mt-[3px] flex h-[13px] w-[91px] shrink-0 items-center justify-between rounded-[3px] border border-[#aaa] bg-[#dedede] px-[5px] text-[#999]">
        Normal
        <svg className="h-[7px] w-[4px]" viewBox="0 0 5 8"><path d="M0 3l2.500-3L5 3zM0 5l2.500 3L5 5z" fill="#888" /></svg>
      </div>
      <div className="mt-[5px] flex h-[21.500px] shrink-0 items-center pl-[4px] text-[#aaa]">
        <span className="w-[22px]">Lock:</span>
        <svg className="h-[10px] w-[54px]" viewBox="0 0 54 10" fill="none" stroke="#777">
          <path d="M1.500 1.500h7v7h-7z" fill="#eee" strokeDasharray="2 1" />
          <path d="M16 9l3-3 5-5" strokeWidth="1.600" />
          <path d="M34 0v10M29 5h10" strokeWidth="1.500" />
          <path d="M44 4.500h7v5h-7z" fill="#666" />
          <path d="M45.500 4.500V2a2 2 0 0 1 4 0v2.500" />
        </svg>
      </div>
      {SHAPES.map((s, i) => (
        <div key={i} className={`flex h-[21.300px] shrink-0 items-center border-t border-[#bbb] ${s.active ? 'bg-[#b7d6f8]' : ''}`}>
          <span className="flex h-full w-[19px] shrink-0 items-center bg-[#d3d3d3] pl-[4px]"><Eye /></span>
          <span className="relative ml-[6px] flex h-[15px] w-[15px] shrink-0 items-center justify-center border border-[#bbb] bg-[#ddd]">
            <span className={`h-[13px] w-[13px] ${s.fill}`} />
            {s.active && <span className="absolute -left-[8px] -top-[4px] h-[20px] w-[20px] rounded-full border-[4px] border-[#387a53]/90" />}
          </span>
          <Link />
          <span className="flex h-[16px] w-[25px] shrink-0 items-center border border-[#444] bg-[#898989]">
            <span className={`mt-[4px] h-[3px] w-[6px] border-b border-l border-[#333] bg-[#aaa] ${s.mark}`} />
          </span>
          <span className="ml-[6px] whitespace-nowrap">Shape</span>
        </div>
      ))}
      <div className="flex h-[21.300px] shrink-0 items-center border-t border-[#bbb] pl-[3px]">
        <span className="h-[15px] w-[12px] shrink-0 border-l border-t border-[#999]" />
        <span className="ml-[5px] flex h-[16px] w-[26px] shrink-0 items-center justify-center border border-[#777] bg-white font-['Liberation_Serif'] text-[11px] font-bold">T</span>
        <span className="ml-[6px] whitespace-nowrap">5 GREAT TIPS</span>
      </div>
      <div className="flex h-[21.300px] shrink-0 items-center border-t border-[#bbb] pl-[3px]">
        <span className="h-[15px] w-[12px] shrink-0 border-l border-t border-[#999]" />
        <span className="ml-[5px] h-[16px] w-[26px] shrink-0 border border-[#777] bg-white bg-[conic-gradient(#ddd_25%,#fff_0_50%,#ddd_0_75%,#fff_0)] bg-[length:6px_6px]" />
        <span className="ml-[6px] whitespace-nowrap">Layer 4</span>
      </div>
      <div className="flex h-[21.300px] shrink-0 items-center border-t border-[#bbb] pl-[3px]">
        <span className="h-[15px] w-[12px] shrink-0 border-l border-t border-[#999]" />
        <span className="ml-[11px] mr-px h-[14px] w-[13px] shrink-0 border border-[#777] bg-[#e8e8e8]" />
        <Link />
        <span className="flex h-[16px] w-[25px] shrink-0 items-center justify-center border border-[#333] bg-[#777]"><span className="h-[6px] w-[20px] bg-white" /></span>
        <span className="ml-[6px] whitespace-nowrap">Shape</span>
      </div>
      <div className="flex h-[15px] shrink-0 items-center pl-[34px]"><Eye /><span className="ml-[4px]">Effects</span></div>
      <div className="ml-[45px] flex h-[15px] shrink-0 items-center whitespace-nowrap border-t border-[#bbb] pl-[3px]"><Eye /><span className="ml-[4px]">Inner Shadow</span></div>
      <div className="ml-[45px] flex h-[15px] shrink-0 items-center whitespace-nowrap border-t border-[#bbb] pl-[3px]"><Eye /><span className="ml-[4px]">Gradient Overlay</span></div>
      <div className="ml-[20px] mt-[1px] h-[10px] w-[25px] shrink-0 border border-[#777] bg-white" />
    </div>
  );
}

function PanelDock() {
  return (
    <div className="absolute left-[1003px] top-[72px] flex h-[648px] w-[277px] flex-col rounded-tl-[3px] border-l-2 border-[#4a4a4a] bg-[#d5d5d5] text-[7.300px] text-[#333]">
      <div className="flex h-[9px] shrink-0 items-center bg-gradient-to-b from-[#585858] to-[#353535] px-[2px] text-[6px] leading-none text-[#bbb]">
        <span className="h-[4px] w-[4px] rounded-full bg-[#999]" />
        <span className="ml-[158px]">▸▸</span>
      </div>
      <div className="flex min-h-0 flex-1">
        <div className="flex w-[172px] flex-col">
          <KulerPanel />
          <InfoPanel />
          <HistoryPanel />
        </div>
        <div className="flex min-w-0 flex-1 flex-col overflow-hidden border-l-2 border-[#555]">
          <ParagraphPanel />
          <CharacterPanel />
          <ColorPanel />
          <LayersPanel />
        </div>
      </div>
    </div>
  );
}

export default function App() {
  return (
    <div className="relative flex h-[720px] w-[1280px] flex-col overflow-hidden bg-[linear-gradient(180deg,#5c93c2_0px,#5c93c2_90px,#3f6ca8_560px,#416fab_720px)] font-['Noto_Sans',sans-serif]">
      <MenuBar />
      <AppBar />
      <OptionsBar />
      <BackWindow />
      <DocumentWindow />
      <Toolbox />
      <SwatchesPanel />
      <ColorPicker />
      <PanelDock />
    </div>
  );
}
